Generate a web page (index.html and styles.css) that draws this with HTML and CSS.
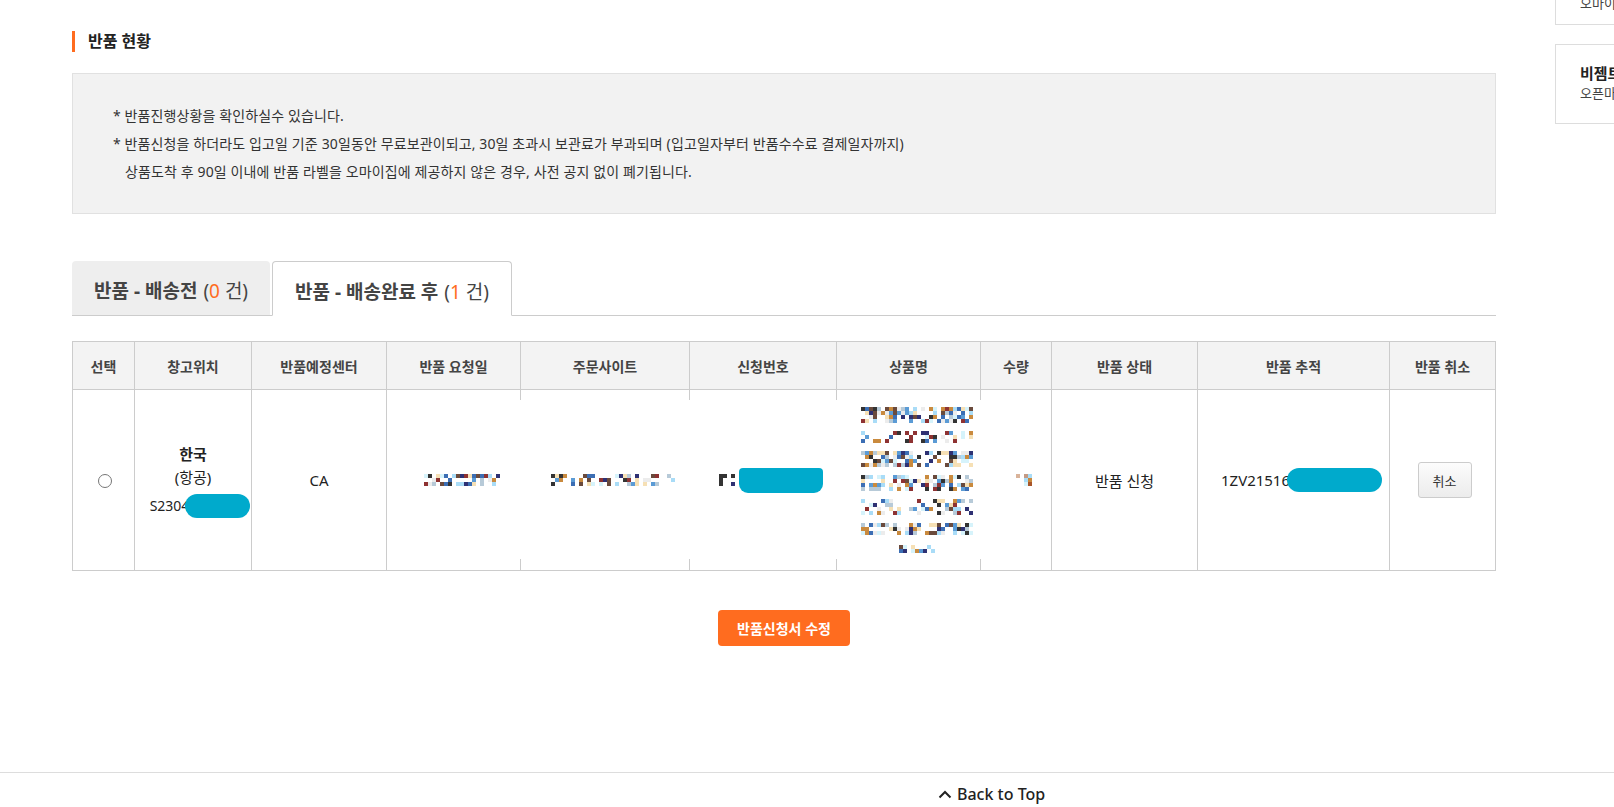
FILE: index.html
```html
<!DOCTYPE html>
<html lang="ko">
<head>
    <meta charset="UTF-8">
    <meta name="viewport" content="width=device-width, initial-scale=1.0">
    <title>반품 현황</title>
    <link rel="stylesheet" href="styles.css">
</head>
<body>
    <div class="quick-menu">
        <div class="quick-card quick-card--top">
            <span class="quick-sub">오마이집 안내</span>
        </div>
        <div class="quick-card">
            <strong class="quick-name">비젬트리 쇼핑</strong>
            <span class="quick-sub">오픈마켓 연동</span>
        </div>
    </div>

    <div class="page">
        <h2 class="section-title">반품 현황</h2>

        <div class="notice">
            <p>* 반품진행상황을 확인하실수 있습니다.</p>
            <p>* 반품신청을 하더라도 입고일 기준 30일동안 무료보관이되고, 30일 초과시 보관료가 부과되며 (입고일자부터 반품수수료 결제일자까지)</p>
            <p class="indent">상품도착 후 90일 이내에 반품 라벨을 오마이집에 제공하지 않은 경우, 사전 공지 없이 폐기됩니다.</p>
        </div>

        <ul class="tabs">
            <li class="tab">반품 - 배송전 <span class="count">(<em>0</em> 건)</span></li>
            <li class="tab active">반품 - 배송완료 후 <span class="count">(<em>1</em> 건)</span></li>
        </ul>

        <table class="return-table">
            <colgroup>
                <col style="width: 62px">
                <col style="width: 117px">
                <col style="width: 135px">
                <col style="width: 134px">
                <col style="width: 169px">
                <col style="width: 147px">
                <col style="width: 144px">
                <col style="width: 71px">
                <col style="width: 146px">
                <col style="width: 192px">
                <col style="width: 106px">
            </colgroup>
            <thead>
                <tr>
                    <th>선택</th>
                    <th>창고위치</th>
                    <th>반품예정센터</th>
                    <th>반품 요청일</th>
                    <th>주문사이트</th>
                    <th>신청번호</th>
                    <th>상품명</th>
                    <th>수량</th>
                    <th>반품 상태</th>
                    <th>반품 추적</th>
                    <th>반품 취소</th>
                </tr>
            </thead>
            <tbody>
                <tr>
                    <td><input type="radio" name="pick" class="pick"></td>
                    <td class="storage">
                        <strong>한국</strong>
                        <div>(항공)</div>
                        <div class="storage-no"><span class="id-wrap">S2304<span class="redact redact--short"></span></span></div>
                    </td>
                    <td>CA</td>
                    <td class="masked"><div class="mosaic" data-cols="19" data-rows="3" data-seed="11"></div></td>
                    <td class="masked"><div class="mosaic" data-cols="31" data-rows="3" data-seed="23" data-fill="0.45"></div></td>
                    <td class="masked">
                        <div class="apply-no">
                            <svg class="apply-mark" width="16" height="12">
                                <rect x="0" y="0" width="4" height="12" fill="#333"/>
                                <rect x="4" y="0" width="4" height="4" fill="#333"/>
                                <rect x="12" y="0" width="4" height="4" fill="#333"/>
                                <rect x="12" y="8" width="4" height="4" fill="#2e3173"/>
                            </svg>
                            <span class="redact redact--apply"></span>
                        </div>
                    </td>
                    <td class="masked">
                        <div class="product-lines">
                            <div class="mosaic" data-cols="28" data-rows="4" data-seed="31"></div>
                            <div class="mosaic" data-cols="28" data-rows="3" data-seed="41" data-fill="0.4"></div>
                            <div class="mosaic" data-cols="28" data-rows="4" data-seed="53"></div>
                            <div class="mosaic" data-cols="28" data-rows="4" data-seed="61"></div>
                            <div class="mosaic" data-cols="28" data-rows="4" data-seed="71" data-fill="0.45"></div>
                            <div class="mosaic" data-cols="28" data-rows="3" data-seed="83"></div>
                            <div class="mosaic last" data-cols="9" data-rows="2" data-seed="97"></div>
                        </div>
                    </td>
                    <td class="qty">
                        <svg width="16" height="12">
                            <rect x="0" y="0" width="4" height="4" fill="#d9b39a"/>
                            <rect x="8" y="0" width="4" height="4" fill="#c49a84"/>
                            <rect x="12" y="0" width="4" height="4" fill="#a9dcf7"/>
                            <rect x="8" y="4" width="4" height="4" fill="#a9dcf7"/>
                            <rect x="12" y="4" width="4" height="4" fill="#c98a3e"/>
                            <rect x="8" y="8" width="4" height="4" fill="#d6f3fb"/>
                            <rect x="12" y="8" width="4" height="4" fill="#a9562a"/>
                        </svg>
                    </td>
                    <td>반품 신청</td>
                    <td><span class="track-wrap">1ZV21516<span class="redact redact--track"></span></span></td>
                    <td><button class="btn-cancel">취소</button></td>
                </tr>
            </tbody>
        </table>

        <div class="actions">
            <button class="btn-edit">반품신청서 수정</button>
        </div>
    </div>

    <footer class="footer">
        <a class="back-top" href="#">
            <svg width="14" height="10" viewBox="0 0 14 10"><polyline points="1.5,8.5 7,3 12.5,8.5" fill="none" stroke="#222" stroke-width="2"/></svg>
            Back to Top
        </a>
    </footer>

    <script src="mosaic.js"></script>
</body>
</html>
```

FILE: styles.css
```css
* {
    margin: 0;
    padding: 0;
    box-sizing: border-box;
}

body {
    font-family: "Noto Sans", "Noto Sans CJK KR", sans-serif;
    color: #222;
    background: #fff;
}

.page {
    width: 1424px;
    margin-left: 72px;
    padding-top: 31px;
}

.section-title {
    font-size: 16px;
    font-weight: 700;
    line-height: 21px;
    color: #222;
    border-left: 3px solid #ff6c1f;
    padding-left: 13px;
}

.notice {
    margin-top: 21px;
    height: 141px;
    background: #f2f2f2;
    border: 1px solid #e1e1e1;
    padding: 28px 40px;
    font-size: 14px;
    line-height: 28px;
    letter-spacing: 0.12px;
    color: #333;
}

.notice .indent {
    padding-left: 12px;
}

.tabs {
    list-style: none;
    display: flex;
    gap: 2px;
    margin-top: 47px;
    height: 55px;
    border-bottom: 1px solid #ccc;
}

.tab {
    height: 54px;
    padding: 4px 22px 0;
    display: flex;
    align-items: center;
    font-size: 19px;
    font-weight: 700;
    color: #444;
    background: #eee;
    border-radius: 4px 4px 0 0;
}

.tab .count {
    font-weight: 400;
    margin-left: 6px;
}

.tab em {
    font-style: normal;
    color: #ff6c1f;
}

.tab.active {
    height: 55px;
    background: #fff;
    border: 1px solid #ccc;
    border-bottom-color: #fff;
}

.return-table {
    margin-top: 25px;
    width: 1424px;
    table-layout: fixed;
    border-collapse: separate;
    border-spacing: 0;
    border-top: 1px solid #ccc;
    border-left: 1px solid #ccc;
}

.return-table th,
.return-table td {
    border-right: 1px solid #ccc;
    border-bottom: 1px solid #ccc;
    text-align: center;
    vertical-align: middle;
}

.return-table th {
    height: 48px;
    background: #f3f3f3;
    font-size: 14px;
    font-weight: 700;
    color: #444;
}

.return-table td {
    height: 181px;
    font-size: 15px;
    color: #222;
}

.return-table td.masked {
    border-right-color: transparent;
    padding-left: 16px;
    background:
        linear-gradient(#ccc, #ccc) right top / 1px 10px no-repeat,
        linear-gradient(#ccc, #ccc) right bottom / 1px 12px no-repeat;
    background-origin: border-box;
}

.pick {
    width: 14px;
    height: 14px;
    margin: 6px 0 0 2px;
}

.storage {
    line-height: 23px;
}

.storage strong {
    display: block;
    font-weight: 700;
}

.storage-no {
    margin-top: 5px;
    font-size: 14px;
}

.id-wrap,
.track-wrap {
    display: inline-flex;
    align-items: center;
}

.redact {
    display: inline-block;
    height: 24px;
    border-radius: 12px;
    background: #00aacc;
}

.redact--short {
    width: 65px;
    margin-left: -4px;
    margin-right: -14px;
}

.redact--track {
    width: 95px;
    margin-left: -3px;
    margin-right: -16px;
}

.mosaic {
    display: flex;
    justify-content: center;
}

.mosaic svg {
    display: block;
}

.apply-no {
    display: flex;
    align-items: center;
    justify-content: center;
    gap: 4px;
}

.redact--apply {
    width: 84px;
    height: 25px;
    border-radius: 4px 4px 9px 9px;
    margin-top: 1px;
}

.product-lines {
    display: flex;
    flex-direction: column;
    align-items: center;
    gap: 8px;
}

.product-lines .last {
    margin-top: 2px;
}

.qty {
    padding-left: 16px;
}

.qty svg {
    display: block;
    margin: 0 auto;
}

.btn-cancel {
    width: 54px;
    height: 36px;
    font-family: inherit;
    font-size: 13px;
    color: #333;
    border: 1px solid #ccc;
    border-radius: 3px;
    background: linear-gradient(#fcfcfc, #ececec);
    margin-left: 4px;
}

.actions {
    margin-top: 39px;
    text-align: center;
}

.btn-edit {
    width: 132px;
    height: 36px;
    font-family: inherit;
    font-size: 14px;
    font-weight: 700;
    color: #fff;
    background: #ff6c1f;
    border: none;
    border-radius: 4px;
}

.footer {
    margin-top: 126px;
    border-top: 1px solid #ddd;
}

.back-top {
    display: inline-flex;
    align-items: center;
    gap: 5px;
    margin-left: 938px;
    padding-top: 10px;
    font-size: 16px;
    line-height: 22px;
    font-weight: 500;
    color: #222;
    text-decoration: none;
}

.quick-menu {
    position: fixed;
    top: -30px;
    left: 1555px;
    width: 150px;
    display: flex;
    flex-direction: column;
    gap: 19px;
}

.quick-card {
    height: 80px;
    border: 1px solid #ddd;
    background: #fff;
    padding: 18px 0 0 24px;
    display: flex;
    flex-direction: column;
    white-space: nowrap;
}

.quick-card--top {
    height: 55px;
    padding-top: 22px;
}

.quick-name {
    font-size: 15px;
    font-weight: 700;
    line-height: 20px;
    color: #222;
}

.quick-sub {
    font-size: 13px;
    line-height: 20px;
    color: #444;
}
```

FILE: mosaic.js
```js
// draws the pixelated placeholders in the blurred columns
(function () {
    const palette = ['#333333', '#2e3173', '#3c6eb4', '#5b9bd5', '#a9dcf7', '#d6f3fb',
        '#f6e0b5', '#c98a3e', '#8e3232', '#6a4a3c', '#ececec', '#b7cad8'];
    const size = 4;

    document.querySelectorAll('.mosaic').forEach(el => {
        const cols = +el.dataset.cols;
        const rows = +el.dataset.rows;
        const fill = +(el.dataset.fill || 0.6);
        let seed = +el.dataset.seed || 1;
        const rand = () => {
            seed = (seed * 16807) % 2147483647;
            return seed / 2147483647;
        };

        let rects = '';
        for (let y = 0; y < rows; y++) {
            for (let x = 0; x < cols; x++) {
                if (rand() < fill) {
                    const c = palette[Math.floor(rand() * palette.length)];
                    rects += `<rect x="${x * size}" y="${y * size}" width="${size}" height="${size}" fill="${c}"/>`;
                }
            }
        }
        el.innerHTML = `<svg width="${cols * size}" height="${rows * size}">${rects}</svg>`;
    });
})();
```
